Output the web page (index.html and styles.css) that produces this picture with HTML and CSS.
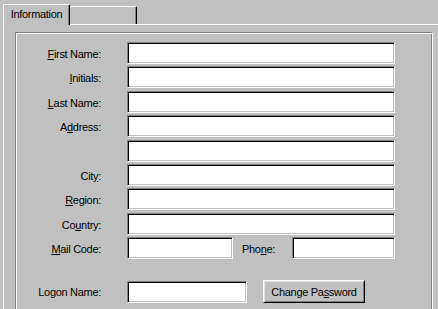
FILE: index.html
```html
<!DOCTYPE html>
<html>
    <head>
        <title>Information</title>
        <link rel="stylesheet" href="styles.css">
    </head>
    <body>
        <div class="tabs">
            <div class="tab active">Information</div>
            <div class="tab blank"></div>
        </div>
        <div class="page">
            <div class="group">
                <div class="row">
                    <span class="label"><u>F</u>irst Name:</span>
                    <input class="field" type="text">
                </div>
                <div class="row">
                    <span class="label"><u>I</u>nitials:</span>
                    <input class="field" type="text">
                </div>
                <div class="row">
                    <span class="label"><u>L</u>ast Name:</span>
                    <input class="field" type="text">
                </div>
                <div class="row">
                    <span class="label">A<u>d</u>dress:</span>
                    <input class="field" type="text">
                </div>
                <div class="row">
                    <span class="label"></span>
                    <input class="field" type="text">
                </div>
                <div class="row">
                    <span class="label">Cit<u>y</u>:</span>
                    <input class="field" type="text">
                </div>
                <div class="row">
                    <span class="label"><u>R</u>egion:</span>
                    <input class="field" type="text">
                </div>
                <div class="row">
                    <span class="label">Co<u>u</u>ntry:</span>
                    <input class="field" type="text">
                </div>
                <div class="row">
                    <span class="label"><u>M</u>ail Code:</span>
                    <input class="field mailcode" type="text">
                    <span class="phone-label">Pho<u>n</u>e:</span>
                    <input class="field phone" type="text">
                </div>
                <div class="row logon">
                    <span class="label">Logon Name:</span>
                    <input class="field logon-name" type="text">
                    <button class="button">Change Pa<u>s</u>sword</button>
                </div>
            </div>
        </div>
    </body>
</html>
```

FILE: styles.css
```css
body {
    margin: 0;
    width: 438px;
    height: 309px;
    overflow: hidden;
    background-color: #c0c0c0;
    font-family: "Liberation Sans", Arial, sans-serif;
    font-size: 11px;
    letter-spacing: -0.3px;
    color: #000;
}
.tabs {
    display: flex;
    align-items: flex-end;
    height: 24px;
    padding-left: 3px;
}
.tab {
    box-sizing: border-box;
    width: 67px;
    height: 18px;
    border-top: 1px solid #fff;
    border-left: 1px solid #fff;
    border-right: 1px solid #000;
    border-radius: 2px 2px 0 0;
    box-shadow: inset -1px 0 #808080;
    background-color: #c0c0c0;
}
.tab.active {
    position: relative;
    z-index: 1;
    height: 21px;
    margin-bottom: -1px;
    text-align: center;
    line-height: 18px;
}
.tab.blank {
    border-left: none;
}
.page {
    height: 277px;
    overflow: hidden;
    margin-left: 3px;
    padding: 7px 0 0 11px;
    border-top: 1px solid #fff;
    border-left: 1px solid #fff;
}
.group {
    box-sizing: border-box;
    width: 418px;
    height: 290px;
    padding-top: 9px;
    border-top: 1px solid #808080;
    border-left: 1px solid #808080;
    border-right: 1px solid #fff;
    border-bottom: 1px solid #fff;
    box-shadow: inset 1px 1px #fff, inset -1px -1px #808080;
    display: flex;
    flex-direction: column;
    gap: 2.375px;
}
.row {
    display: flex;
    align-items: flex-start;
    height: 22px;
}
.label {
    width: 85px;
    margin-right: 26px;
    padding-top: 1px;
    line-height: 22px;
    text-align: right;
    white-space: nowrap;
}
.field {
    box-sizing: border-box;
    width: 268px;
    height: 22px;
    margin: 0;
    padding: 0;
    background-color: #fff;
    border: 1px solid;
    border-color: #808080 #fff #fff #808080;
    box-shadow: inset 1px 1px #000, inset -1px -1px #c0c0c0;
    outline: none;
}
.mailcode {
    width: 106px;
}
.phone-label {
    width: 50px;
    margin-left: 9px;
    padding-top: 1px;
    line-height: 22px;
    white-space: nowrap;
}
.phone {
    width: 103px;
}
.logon {
    margin-top: 19.625px;
    align-items: flex-end;
}
.logon-name {
    width: 120px;
}
.button {
    box-sizing: border-box;
    width: 102px;
    height: 23px;
    margin: 0 0 0 16px;
    padding: 0;
    font-family: inherit;
    font-size: 11px;
    letter-spacing: -0.3px;
    color: #000;
    background-color: #c0c0c0;
    border: 1px solid;
    border-color: #fff #000 #000 #fff;
    box-shadow: inset 1px 1px #dfdfdf, inset -1px -1px #808080;
}
```
